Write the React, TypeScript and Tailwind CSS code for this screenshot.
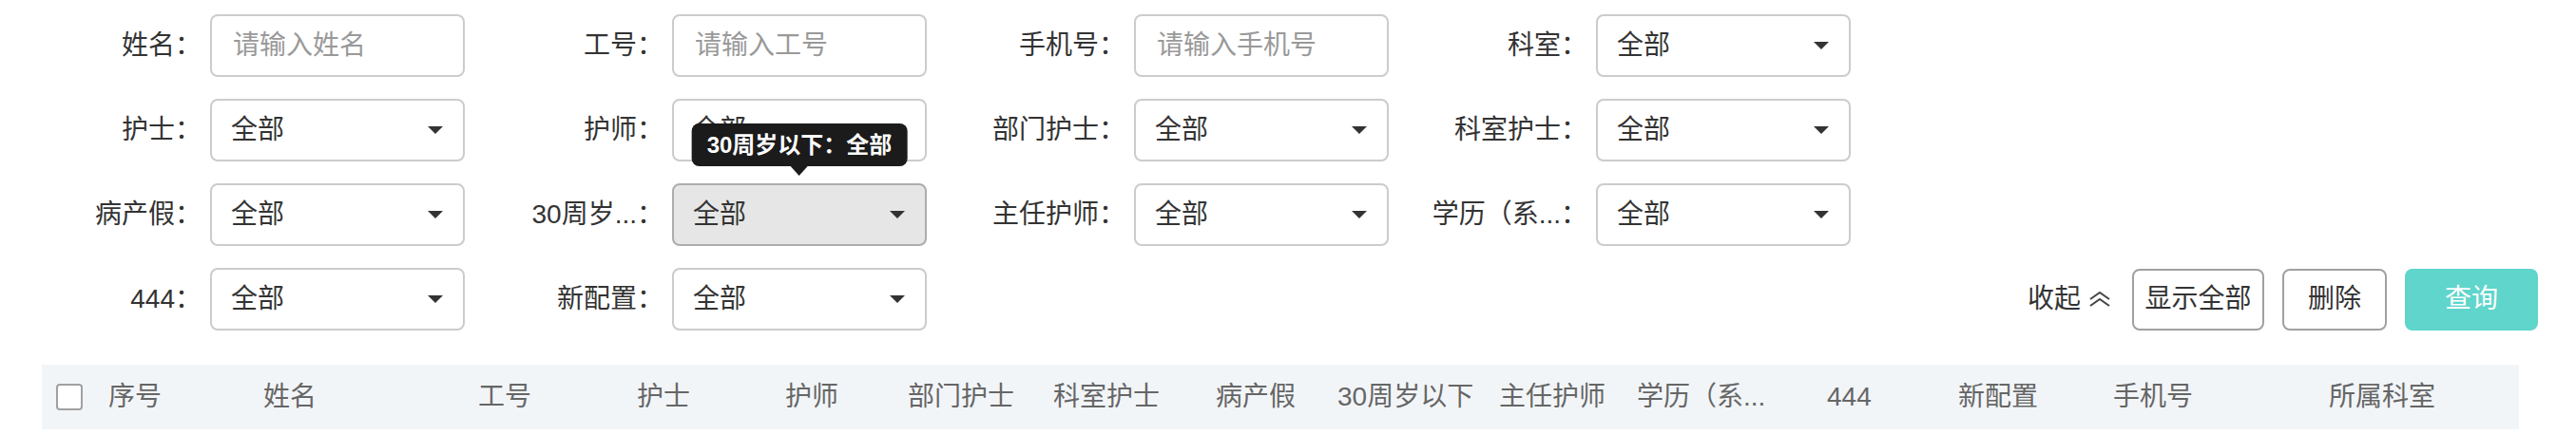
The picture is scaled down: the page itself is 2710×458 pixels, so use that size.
import React from 'react'

type Field = { label: string; placeholder?: string; hover?: boolean; tip?: string }

const rows: Field[][] = [
  [
    { label: '姓名', placeholder: '请输入姓名' },
    { label: '工号', placeholder: '请输入工号' },
    { label: '手机号', placeholder: '请输入手机号' },
    { label: '科室' },
  ],
  [{ label: '护士' }, { label: '护师' }, { label: '部门护士' }, { label: '科室护士' }],
  [
    { label: '病产假' },
    { label: '30周岁...', hover: true, tip: '30周岁以下：全部' },
    { label: '主任护师' },
    { label: '学历（系...' },
  ],
  [{ label: '444' }, { label: '新配置' }],
]

// 表头列宽（像素）
const columns: [string, number][] = [
  ['序号', 163],
  ['姓名', 226],
  ['工号', 167],
  ['护士', 156],
  ['护师', 129],
  ['部门护士', 153],
  ['科室护士', 171],
  ['病产假', 128],
  ['30周岁以下', 170],
  ['主任护师', 145],
  ['学历（系...', 200],
  ['444', 138],
  ['新配置', 163],
  ['手机号', 227],
  ['所属科室', 200],
]

function Caret() {
  return <span className="w-0 h-0 border-x-[8px] border-x-transparent border-t-[8px] border-t-[#333]" />
}

function Control({ field }: { field: Field }) {
  if (field.placeholder) {
    return (
      <div className="w-[268px] h-[66px] border-2 border-[#cccccc] rounded-[8px] bg-white flex items-center pl-[22px] text-[#999]">
        {field.placeholder}
      </div>
    )
  }
  return (
    <div className="relative">
      {field.tip && (
        <div className="absolute left-1/2 -translate-x-1/2 bottom-[calc(100%+18px)] z-10">
          <div className="bg-[#1b1b1b] text-white text-[24px] font-bold leading-[33px] px-[16px] py-[6px] rounded-[8px] whitespace-nowrap">
            {field.tip}
          </div>
          <div className="absolute left-1/2 -translate-x-1/2 top-full w-0 h-0 border-x-[9px] border-x-transparent border-t-[10px] border-t-[#1b1b1b]" />
        </div>
      )}
      <div
        className={`w-[268px] h-[66px] border-2 rounded-[8px] flex items-center justify-between pl-[20px] pr-[21px] text-[#333] ${
          field.hover ? 'bg-[#e6e6e6] border-[#adadad]' : 'bg-white border-[#cccccc]'
        }`}
      >
        <span>全部</span>
        <Caret />
      </div>
    </div>
  )
}

function FormItem({ field }: { field: Field }) {
  return (
    <div className="flex items-center w-[486px]">
      <label className="w-[176px] text-right pr-[9px] text-[#333] whitespace-nowrap">{field.label}：</label>
      <Control field={field} />
    </div>
  )
}

export default function App() {
  return (
    <div className="w-[2710px] h-[458px] bg-white font-['Liberation_Sans','Noto_Sans_CJK_SC',sans-serif] text-[28px] leading-none">
      <div className="pt-[15px] pl-[45px] pr-[40px] flex flex-col gap-[23px]">
        {rows.map((row, i) => (
          <div key={i} className="flex items-center">
            {row.map((f) => (
              <FormItem key={f.label} field={f} />
            ))}
            {i === rows.length - 1 && (
              <div className="ml-auto flex items-center">
                <span className="text-[#333] flex items-center gap-[7px] mr-[21px]">
                  收起
                  <svg width="26" height="16" viewBox="0 0 26 16" fill="none" stroke="#444" strokeWidth="2">
                    <polyline points="3,8 13,1 23,8" />
                    <polyline points="3,15 13,8 23,15" />
                  </svg>
                </span>
                <button className="w-[139px] h-[65px] border-2 border-[#a0a0a0] rounded-[8px] bg-white text-[#333] mr-[19px]">
                  显示全部
                </button>
                <button className="w-[110px] h-[65px] border-2 border-[#a0a0a0] rounded-[8px] bg-white text-[#333] mr-[19px]">
                  删除
                </button>
                <button className="w-[140px] h-[65px] rounded-[8px] bg-[#5fd5cc] text-white">查询</button>
              </div>
            )}
          </div>
        ))}
      </div>

      <div className="mt-[36px] ml-[44px] w-[2606px] h-[68px] bg-[#f2f5f8] flex items-center pl-[15px] text-[#666]">
        <span className="w-[28px] h-[28px] border-2 border-[#a0a0a0] rounded-[4px] bg-white mr-[27px]" />
        {columns.map(([name, w]) => (
          <div key={name} className="shrink-0 whitespace-nowrap" style={{ width: w }}>
            {name}
          </div>
        ))}
      </div>
    </div>
  )
}
